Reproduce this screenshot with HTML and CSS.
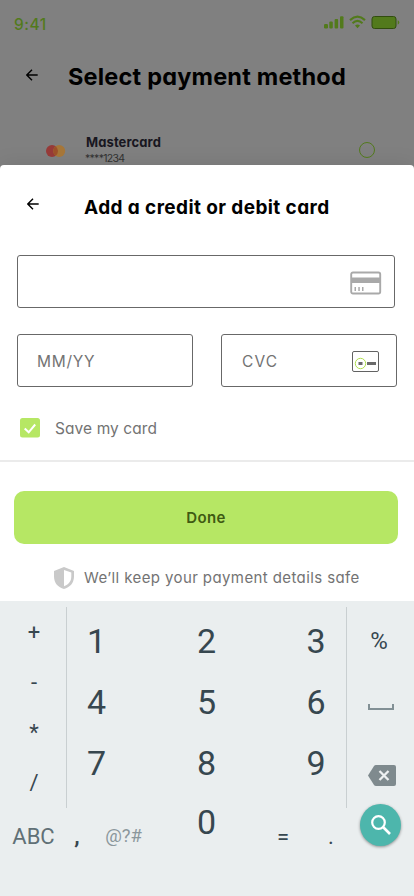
FILE: index.html
```html
<!DOCTYPE html>
<html lang="en">
<head>
<meta charset="utf-8">
<title>Add a card</title>
<link rel="stylesheet" href="styles.css">
</head>
<body>
<main class="screen">
  <section class="backdrop">
    <div class="status">
      <span class="time">9:41</span>
      <svg class="status-icons" width="78" height="16" viewBox="0 0 78 16" fill="#527a1c">
        <rect x="0" y="9" width="4" height="4.500" rx="1.200"/><rect x="5.300" y="6.500" width="3.500" height="7" rx="1"/><rect x="10.600" y="4" width="3.500" height="9.500" rx="1"/><rect x="16" y="1.200" width="3.500" height="12.300" rx="1"/>
        <g fill="none" stroke="#527a1c" stroke-width="2.100"><path d="M26 5.100Q33.500-1.700 41 5.100"/><path d="M28.500 8.200Q33.500 3.700 38.500 8.200"/></g><path d="M31 10.600Q33.500 8.600 36 10.600L33.500 13.200Z"/>
        <rect x="48" y="1.500" width="24" height="12" rx="2.500" stroke="#314d0e"/><path d="M73.700 5.300Q75.300 5.900 75.300 7.500T73.700 9.700Z"/>
      </svg>
    </div>
    <header class="page-head">
      <svg class="arrow" width="12" height="12" viewBox="0 0 12 12"><path d="M6 .7.8 6 6 11.300M1 6H11.700"/></svg>
      <h1>Select payment method</h1>
    </header>
    <div class="method">
      <svg class="brand" width="20" height="12" viewBox="0 0 20 12"><circle cx="6" cy="6" r="6" fill="#963a38"/><circle cx="13.200" cy="6" r="6" fill="#a67638"/><path d="M9.600 1.200a6 6 0 0 1 0 9.600a6 6 0 0 1 0-9.600" fill="#9c5029"/></svg>
      <div class="method-text"><strong>Mastercard</strong><span>****1234</span></div>
      <span class="radio"></span>
    </div>
  </section>

  <section class="sheet">
    <header class="sheet-head">
      <svg class="arrow" width="12" height="12" viewBox="0 0 12 12"><path d="M6 .7.8 6 6 11.300M1 6H11.700"/></svg>
      <h2>Add a credit or debit card</h2>
    </header>
    <div class="field number">
      <svg width="32" height="24" viewBox="0 0 32 24"><rect x="1.200" y="1.500" width="29" height="21" rx="1.800" fill="none" stroke="#a9a9a9" stroke-width="1.900"/><path fill="#a9a9a9" d="M1 6.500h29.500v5.500H1zM4.500 16h1.500v4H4.500zM8.300 16h1.500v4H8.300zM12 16h1.500v4H12z"/></svg>
    </div>
    <div class="pair">
      <div class="field"><span class="expiry">MM/YY</span></div>
      <div class="field"><span class="cvc">CVC</span>
        <svg width="28" height="22" viewBox="0 0 28 22"><rect x=".5" y=".5" width="26" height="20" rx="1.500" fill="none" stroke="#626262"/><circle cx="8.500" cy="12.500" r="5.200" fill="none" stroke="#b0e04f"/><path fill="#6a6a6a" d="M6.500 11h4v3h-4zM15 11h9v3h-9z"/></svg>
      </div>
    </div>
    <div class="save">
      <svg width="20" height="20" viewBox="0 0 20 20"><rect width="20" height="19.500" rx="2.500" fill="#b6e764"/><path d="M4.700 10.500 8.700 14.300 15.200 6.500" fill="none" stroke="#fff" stroke-width="2"/></svg>
      <span>Save my card</span>
    </div>
    <div class="action"><button>Done</button></div>
    <div class="safe">
      <svg width="20" height="22" viewBox="0 0 20 22"><path fill="#c9c9c9" fill-rule="evenodd" d="M10 0 20 3.900V9.500C20 16 15.800 20.500 10 22C4.200 20.500 0 16 0 9.500V3.900ZM10 3V19.300C14.500 17.500 17.300 14.500 17.300 9.500V5.600Z"/></svg>
      <span>We’ll keep your payment details safe</span>
    </div>
  </section>

  <section class="keyboard">
    <div class="keys">
      <div class="side operators"><span>+</span><span>-</span><span>*</span><span>/</span></div>
      <div class="digits">
        <span>1</span><span>2</span><span>3</span>
        <span>4</span><span>5</span><span>6</span>
        <span>7</span><span>8</span><span>9</span>
      </div>
      <div class="side tools">
        <span class="percent">%</span>
        <svg class="space" width="26" height="7" viewBox="0 0 26 7"><path d="M1 0V5H25V0" fill="none" stroke="#829095" stroke-width="2"/></svg>
        <svg class="erase" width="28" height="21" viewBox="0 0 28 21"><path fill="#7f8a8e" d="M8 0H26Q28 0 28 2V19Q28 21 26 21H8Q6.700 21 6 20L0 10.500 6 1Q6.700 0 8 0Z"/><path d="M11.500 6 20.500 15M20.500 6 11.500 15" stroke="#edf0f1" stroke-width="2.300"/></svg>
      </div>
    </div>
    <div class="bottom">
      <span class="abc">ABC</span><span class="comma">,</span><span class="symbols">@?#</span><span class="zero">0</span><span class="equals">=</span><span class="dot">.</span>
      <span class="search"><svg width="20" height="20" viewBox="0 0 20 20" fill="none" stroke="#fff"><circle cx="7.500" cy="7.500" r="6.300" stroke-width="2.200"/><path d="m12 12 7 7" stroke-width="2.600"/></svg></span>
    </div>
  </section>
</main>
</body>
</html>
```
FILE: styles.css
```css
* { box-sizing: border-box; }
body { margin: 0; background: #808080; font-family: Inter, sans-serif; font-feature-settings: "cv11"; }
h1, h2 { margin: 0; color: #000; font-weight: 700; white-space: nowrap; }
svg { display: block; flex: none; }
.screen { width: 414px; height: 896px; overflow: hidden; }

.backdrop { height: 165px; background: #808080; overflow: hidden; }
.status { display: flex; justify-content: space-between; height: 48px; padding: 15px 12px 0 14px; }
.time { color: #527a1c; font-size: 15.5px; font-weight: 500; line-height: 19px; letter-spacing: 0.5px; }
.arrow { fill: none; stroke: #000; stroke-width: 1.4; }
.page-head { display: flex; align-items: center; height: 56px; padding-left: 26px; }
.page-head .arrow { margin: -2px 30px 0 0; }
h1 { padding-top: 2px; font-size: 23.5px; line-height: 30px; letter-spacing: 0.2px; }
.method { display: flex; height: 61px; padding: 30px 39px 0 46px; }
.brand { margin-top: 11px; }
.method-text { display: flex; flex-direction: column; margin-left: 20px; color: #18171f; }
.method-text strong { font-size: 13px; line-height: 17px; letter-spacing: 0.1px; }
.method-text span { margin-left: -1px; font-size: 10.5px; line-height: 15px; color: #303030; letter-spacing: -0.7px; }
.radio { width: 16px; height: 16px; margin: 8px 0 0 auto; border: 1px solid #527a1c; border-radius: 50%; }

.sheet { height: 436px; background: #fff; border-radius: 4px 4px 0 0; box-shadow: 0 -2px 20px rgba(0, 0, 0, 0.08); }
.sheet-head { display: flex; align-items: center; height: 90px; padding: 0 0 6px 27px; }
.sheet-head .arrow { margin: -6px 45px 0 0; }
h2 { padding-top: 2px; font-size: 19px; line-height: 26px; letter-spacing: 0.4px; }
.field { display: flex; align-items: center; height: 53px; border: 1px solid #686868; border-radius: 3px; color: #737373; font-size: 15.5px; }
.number { width: 378px; margin-left: 17px; padding-right: 12px; justify-content: flex-end; }
.number svg { margin-top: 3px; }
.pair { display: flex; gap: 28px; margin: 26px 17px 0; }
.pair .field { width: 176px; flex: none; padding: 1px 16px 0 19px; justify-content: space-between; }
.pair svg { margin-top: 2px; }
.expiry { letter-spacing: 0.7px; }
.cvc { margin-left: 1px; letter-spacing: 1.1px; }
.save { display: flex; align-items: center; height: 73px; padding: 8px 0 0 20px; gap: 15px; color: #737373; font-size: 15.5px; letter-spacing: 0.08px; }
.save span { padding-top: 2px; }
.action { border-top: 2px solid #ebebeb; padding: 29px 16px 0 14px; }
button { display: block; width: 100%; height: 53px; border: 0; border-radius: 10px; background: #b6e764; color: #3f5a12; font: 600 15px Inter, sans-serif; font-feature-settings: "cv11"; letter-spacing: 0.4px; }
.safe { display: flex; align-items: center; height: 57px; padding: 10px 0 0 54px; gap: 10px; color: #737373; font-size: 15px; letter-spacing: 0.4px; white-space: nowrap; }

.keyboard { height: 295px; background: #eaeeef; color: #37474f; font-family: Roboto, sans-serif; font-feature-settings: normal; padding-top: 6px; }
.keys { display: flex; height: 201px; }
.side { width: 67px; display: flex; flex-direction: column; align-items: center; }
.operators { padding: 1px 0 0 2px; border-right: 1px solid #c9cfd1; font-size: 22px; line-height: 50px; }
.digits { display: grid; grid-template-columns: 59px 161px 58px; grid-auto-rows: 61px; padding-top: 4px; width: 279px; font-size: 34px; line-height: 61px; text-align: center; }
.tools { width: 68px; border-left: 1px solid #c9cfd1; }
.percent { font-size: 24px; line-height: 30px; margin: 19px 0 0 -3px; }
.space { margin: 48px 0 0; }
.erase { margin: 54px 0 0 2px; }
.bottom { display: grid; grid-template-columns: 67px 20px 73px 93px 60px 36px 65px; height: 88px; font-size: 22px; line-height: 58px; text-align: center; }
.abc { color: #607076; }
.comma { font-weight: 700; }
.symbols { color: #8b979c; font-size: 18.5px; line-height: 57px; }
.zero { font-size: 34px; line-height: 29px; }
.search { display: flex; align-items: center; justify-content: center; width: 41px; height: 42px; margin: -4px 0 0 11px; background: #4db6ac; border-radius: 50%; box-shadow: 0 1px 3px rgba(0, 0, 0, 0.4); }
```
